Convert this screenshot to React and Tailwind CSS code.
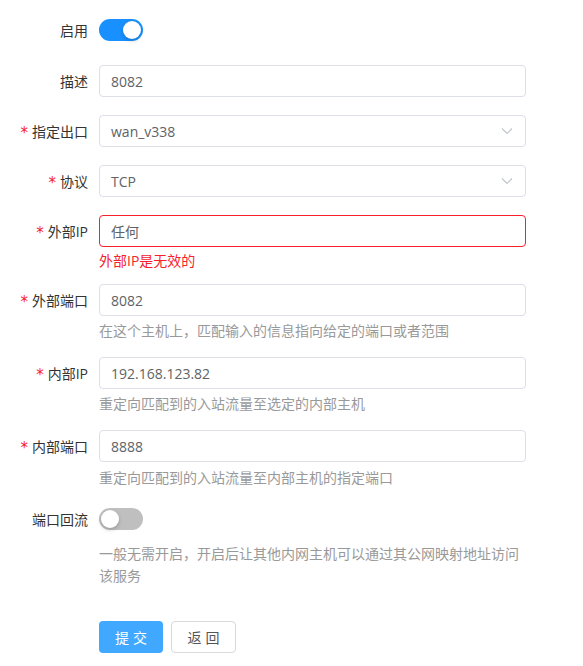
import React from 'react';

function Label({ text, required }) {
  return (
    <div className="w-[88px] shrink-0 flex justify-end items-center h-[32px] text-[14px] text-[#333]">
      {required && (
        <span className="text-[#f5222d] mr-[4px] mt-[5px] text-[15px] leading-none font-['DejaVu_Sans',sans-serif]">*</span>
      )}
      <span>{text}</span>
    </div>
  );
}

function Toggle({ on }) {
  return (
    <div
      className={
        on
          ? 'w-[44px] h-[22px] rounded-full bg-[#1890ff] flex items-center justify-end p-[2px]'
          : 'w-[44px] h-[22px] rounded-full bg-[#bfbfbf] flex items-center justify-start p-[2px]'
      }
    >
      <div className="w-[18px] h-[18px] rounded-full bg-white shadow-[0_2px_4px_rgba(0,35,11,0.2)]" />
    </div>
  );
}

function Input({ value, error }) {
  return (
    <div
      className={
        error
          ? 'w-[427px] h-[32px] rounded-[4px] border border-[#f5222d] flex items-center px-[11px] text-[14px] text-[#606266]'
          : 'w-[427px] h-[32px] rounded-[4px] border border-[#dcdfe6] flex items-center px-[11px] text-[14px] text-[#606266]'
      }
    >
      {value}
    </div>
  );
}

function Select({ value }) {
  return (
    <div className="w-[427px] h-[32px] rounded-[4px] border border-[#dcdfe6] flex items-center justify-between pl-[11px] pr-[11px] text-[14px] text-[#606266]">
      <span>{value}</span>
      <svg width="12" height="8" viewBox="0 0 12 8" fill="none" className="mr-[1px]">
        <path d="M1 1.5 L6 6.5 L11 1.5" stroke="#c0c4cc" strokeWidth="1.1" />
      </svg>
    </div>
  );
}

function Row({ label, required, children, className }) {
  return (
    <div className={'flex items-start gap-[11px] ' + className}>
      <Label text={label} required={required} />
      <div className="flex flex-col">{children}</div>
    </div>
  );
}

export default function App() {
  return (
    <div className="w-[583px] min-h-[666px] bg-white pt-[14px] font-['Open_Sans','Noto_Sans_CJK_SC',sans-serif]">
      <Row label="启用" className="mb-[19px]">
        <div className="h-[32px] flex items-center">
          <Toggle on />
        </div>
      </Row>

      <Row label="描述" className="mb-[18px]">
        <Input value="8082" />
      </Row>

      <Row label="指定出口" required className="mb-[18px]">
        <Select value="wan_v338" />
      </Row>

      <Row label="协议" required className="mb-[18px]">
        <Select value="TCP" />
      </Row>

      <Row label="外部IP" required className="mb-[12px]">
        <Input value="任何" error />
        <div className="mt-[3px] leading-[22px] text-[14px] text-[#f5222d]">外部IP是无效的</div>
      </Row>

      <Row label="外部端口" required className="mb-[15px]">
        <Input value="8082" />
        <div className="mt-[4px] leading-[22px] text-[14px] text-[#999]">
          在这个主机上，匹配输入的信息指向给定的端口或者范围
        </div>
      </Row>

      <Row label="内部IP" required className="mb-[15px]">
        <Input value="192.168.123.82" />
        <div className="mt-[4px] leading-[22px] text-[14px] text-[#999]">重定向匹配到的入站流量至选定的内部主机</div>
      </Row>

      <Row label="内部端口" required className="mb-[14px]">
        <Input value="8888" />
        <div className="mt-[5px] leading-[22px] text-[14px] text-[#999]">重定向匹配到的入站流量至内部主机的指定端口</div>
      </Row>

      <Row label="端口回流" className="mb-[34px]">
        <div className="h-[32px] flex items-center">
          <Toggle />
        </div>
        <div className="w-[427px] mt-[8px] leading-[22px] text-[14px] text-[#999]">
          一般无需开启，开启后让其他内网主机可以通过其公网映射地址访问该服务
        </div>
      </Row>

      <div className="flex gap-[8px] pl-[99px]">
        <button className="w-[64px] h-[32px] rounded-[4px] bg-[#40a9ff] text-white text-[14px] flex items-center justify-center gap-[4px]">
          <span>提</span>
          <span>交</span>
        </button>
        <button className="w-[65px] h-[32px] rounded-[4px] bg-white border border-[#d9d9d9] text-[#555] text-[14px] flex items-center justify-center gap-[4px]">
          <span>返</span>
          <span>回</span>
        </button>
      </div>
    </div>
  );
}
